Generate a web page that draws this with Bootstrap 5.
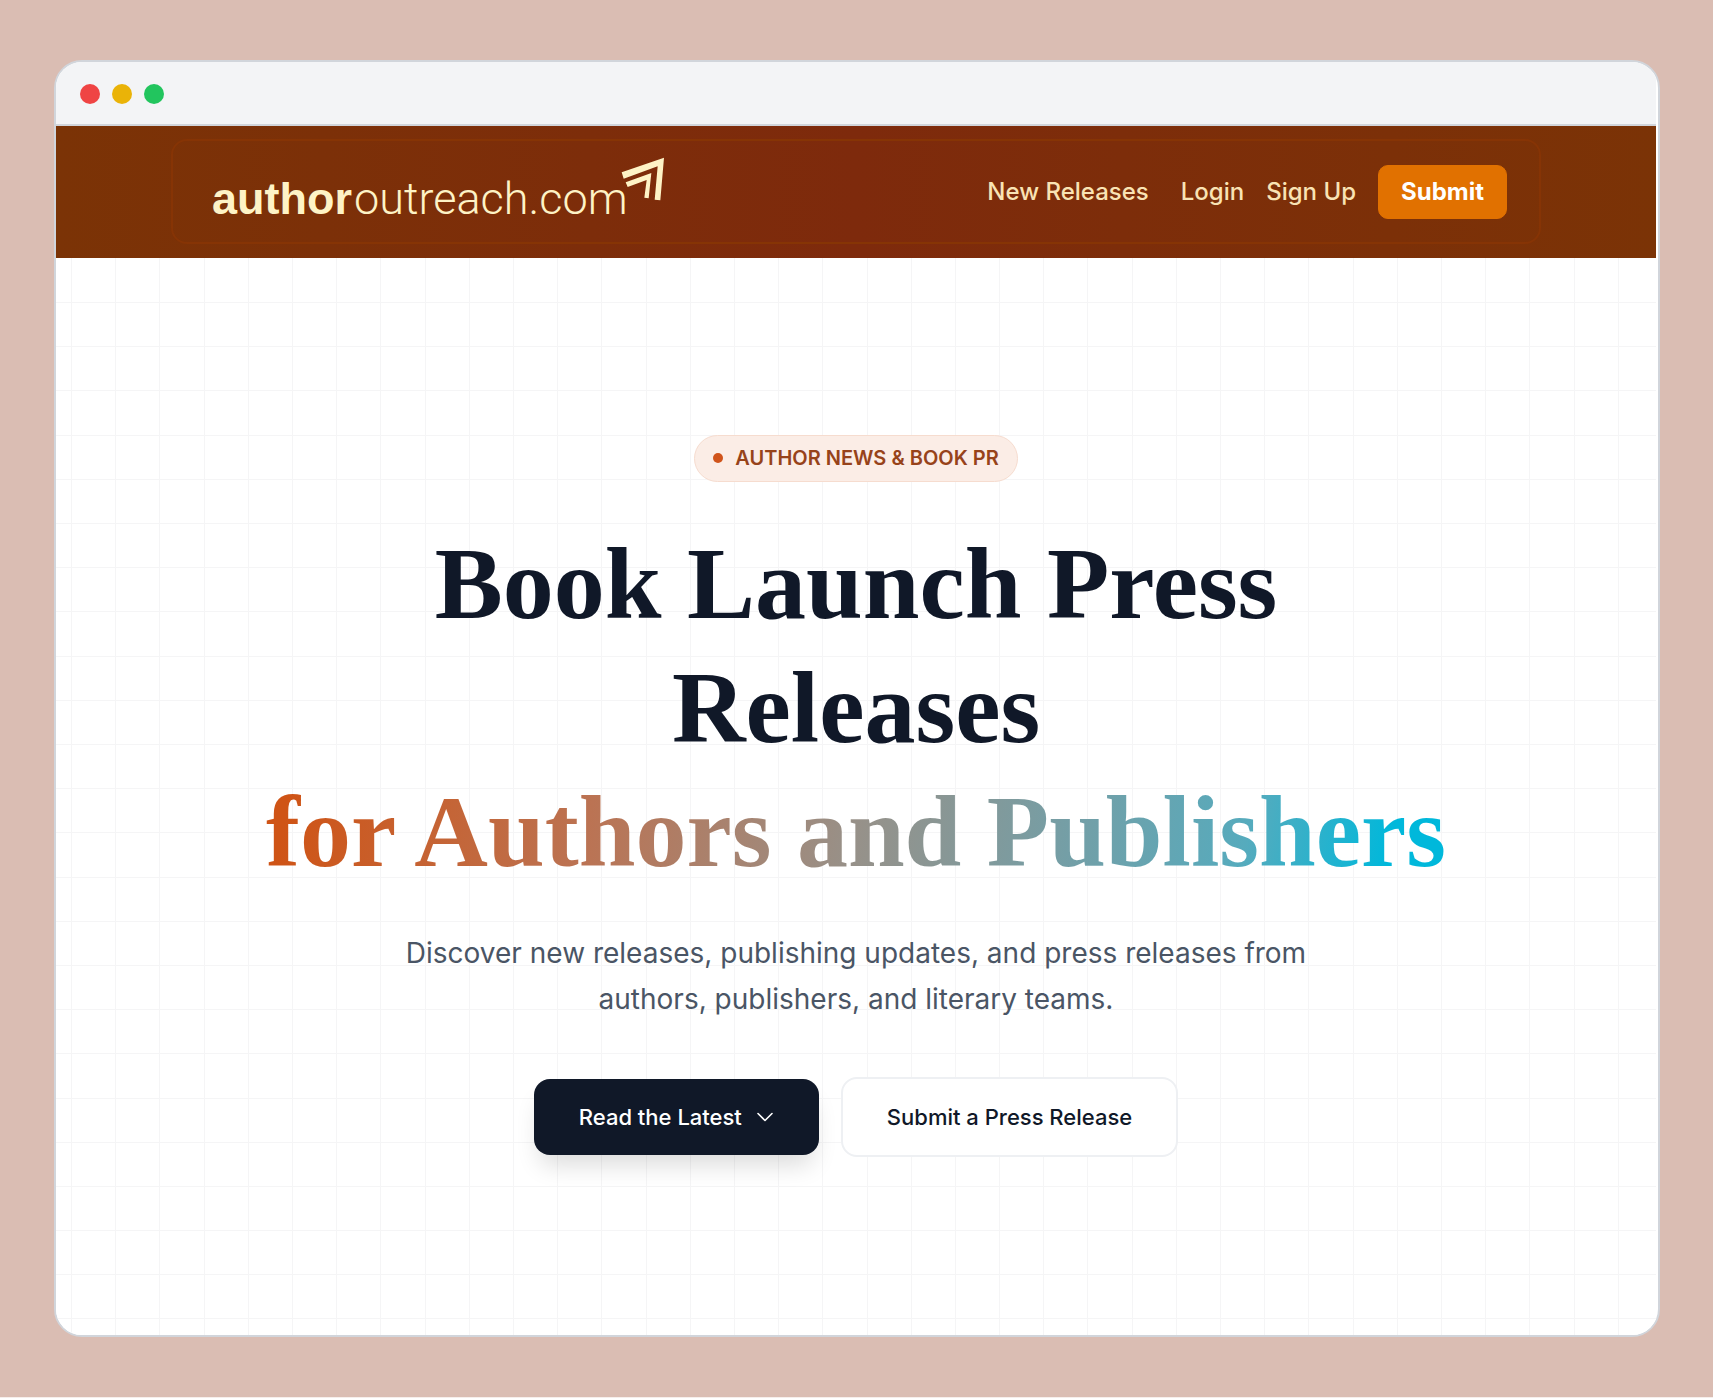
<!DOCTYPE html>
<html lang="en">
<head>
<meta charset="utf-8">
<meta name="viewport" content="width=device-width, initial-scale=1">
<title>authoroutreach.com</title>
<link href="https://cdn.jsdelivr.net/npm/bootstrap@5.3.0/dist/css/bootstrap.min.css" rel="stylesheet">
<style>
  body { background: #dabdb3; font-family: Inter, "Liberation Sans", sans-serif; color: #101828; }
  .stage { padding: 60px 53px 60px 54px; border-bottom: 1px solid #f6eeeb; }
  .browser { background: #fff; border: 2px solid #d1d5db; border-radius: 28px; padding-right: 2px; }
  .titlebar { height: 64px; padding: 2px 24px 0; gap: 12px; background: #f3f4f6; border-bottom: 2px solid #d1d5db; }
  .dot { width: 20px; height: 20px; }
  .dot-red { background: #ef4444; }
  .dot-yellow { background: #eab308; }
  .dot-green { background: #22c55e; }

  .site-header { padding: 13px 16px 14px; background: linear-gradient(90deg, #7b3306, #7e2a0c 50%, #7b3306); }
  .site-nav { max-width: 1370px; min-height: 105px; padding: 1px 32px 0 39px; border: 2px solid #863405; border-radius: 16px; }
  .logo { color: #fef3c6; font-size: 45px; line-height: 56px; padding-top: 12px; text-decoration: none; }
  .logo-bold { font-family: "Liberation Sans", sans-serif; font-weight: 700; }
  .logo-thin { font-family: Roboto, sans-serif; font-weight: 300; margin-left: 2px; }
  .logo svg { width: 44px; height: 44px; margin: -13px 0 0 -7px; }
  .menu-links { font-size: 24px; font-weight: 500; line-height: 32px; gap: 22px; }
  .menu-links a { color: #f9e3b4; text-decoration: none; }
  .menu-links .first-link { margin-right: 10px; }
  .btn-submit { background: #e17100; color: #fff; font-size: 24px; font-weight: 700; line-height: 32px; padding: 10px 22px; border-radius: 10px; border: 1px solid #e17100; }

  .hero { padding: 46px 24px 48px;
    background:
      repeating-linear-gradient(90deg, transparent 0 15px, #f5f5f6 15px 16px, transparent 16px 2.58vw),
      repeating-linear-gradient(180deg, transparent 0 43px, #f5f5f6 43px 44px, transparent 44px 2.58vw) 0 1px no-repeat #fff; }
  .pill { gap: 12px; padding: 0 18px; height: 47px; background: #fbede6; border: 1px solid #f6dccf; color: #97431a; font-size: 20px; font-weight: 600; }
  .pill-dot { width: 10px; height: 10px; background: #d0541b; }
  .headline { max-width: 1200px; margin: 40px 0 36px; font-family: "Liberation Serif", serif; font-weight: 700; font-size: 102px; line-height: 124px; }
  .headline-accent { background: linear-gradient(100deg, #cf5416 3%, #bb7353 28%, #979189 50%, #739fa7 68%, #56abbd 82%, #00b8db 94%); -webkit-background-clip: text; background-clip: text; color: transparent; }
  .intro { max-width: 920px; margin-bottom: 55px; font-size: 28px; line-height: 46px; color: #4a5565; }
  .actions { gap: 22px; }
  .cta { font-size: 22px; font-weight: 500; line-height: 32px; border-radius: 16px; }
  .cta-dark { padding: 22px 45px; background: #101828; color: #fff; border: 0; gap: 14px; box-shadow: 0 16px 24px -6px rgba(0,0,0,.14); }
  .cta-light { padding: 22px 44px; background: #fff; color: #101828; border: 2px solid #eef0f3; }
</style>
</head>
<body>
<div class="stage min-vh-100 d-flex">
  <div class="browser flex-grow-1 d-flex flex-column overflow-hidden">
    <div class="titlebar d-flex align-items-center flex-shrink-0">
      <span class="dot dot-red rounded-circle"></span>
      <span class="dot dot-yellow rounded-circle"></span>
      <span class="dot dot-green rounded-circle"></span>
    </div>
    <header class="site-header">
      <nav class="site-nav mx-auto d-flex flex-wrap align-items-center justify-content-between" aria-label="Main">
        <a class="logo d-flex align-items-start" href="#"><span><span class="logo-bold">author</span><span class="logo-thin">outreach.com</span></span><svg viewBox="1256 78 132 132" fill="#fef3c6" aria-hidden="true"><path d="M1258 124 1385 80 1374 208 1357 206 1366 106 1264 143ZM1270 154 1347 126 1339 202 1326 200 1333 147 1276 168Z"/></svg></a>
        <div class="menu-links d-flex flex-wrap align-items-center">
          <a class="first-link" href="#">New Releases</a>
          <a href="#">Login</a>
          <a href="#">Sign Up</a>
          <button type="button" class="btn btn-submit">Submit</button>
        </div>
      </nav>
    </header>
    <main class="hero flex-grow-1 d-flex flex-column align-items-center justify-content-center text-center">
      <div class="pill d-inline-flex align-items-center rounded-pill"><span class="pill-dot rounded-circle"></span>AUTHOR NEWS &amp; BOOK PR</div>
      <h1 class="headline">Book Launch Press Releases <span class="headline-accent d-block">for Authors and Publishers</span></h1>
      <p class="intro">Discover new releases, publishing updates, and press releases from authors, publishers, and literary teams.</p>
      <div class="actions d-flex flex-wrap align-items-center justify-content-center">
        <button type="button" class="btn cta cta-dark d-inline-flex align-items-center">Read the Latest
          <svg width="18" height="18" viewBox="0 0 18 18" fill="none" stroke="currentColor" stroke-width="1.6" stroke-linecap="round" stroke-linejoin="round" aria-hidden="true"><path d="M2 5.500 9 12.500 16 5.500"/></svg>
        </button>
        <button type="button" class="btn cta cta-light">Submit a Press Release</button>
      </div>
    </main>
  </div>
</div>
<script src="https://cdn.jsdelivr.net/npm/bootstrap@5.3.0/dist/js/bootstrap.bundle.min.js"></script>
</body>
</html>
